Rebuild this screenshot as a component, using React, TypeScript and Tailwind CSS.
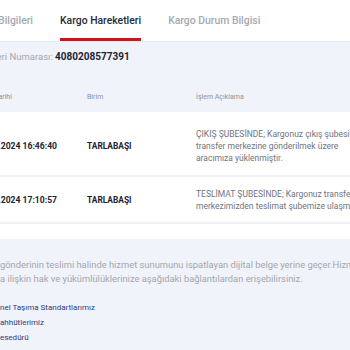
import React from 'react';

const rows = [
  {
    date: '10.09.2024 16:46:40',
    unit: 'TARLABAŞI',
    desc: 'ÇIKIŞ ŞUBESİNDE; Kargonuz çıkış şubesinden transfer merkezine gönderilmek üzere aracımıza yüklenmiştir.',
  },
  {
    date: '11.09.2024 17:10:57',
    unit: 'TARLABAŞI',
    desc: 'TESLİMAT ŞUBESİNDE; Kargonuz transfer merkezimizden teslimat şubemize ulaşmıştır.',
  },
];

const links = ['nel Taşıma Standartlarımız', 'ahhütlerimiz', 'esedürü'];

export default function App() {
  return (
    <div className="w-[350px] h-[350px] overflow-hidden bg-[#f0f3f9] font-['Roboto',sans-serif]">
      {/* tabs */}
      <div className="h-[42px] bg-white border-b border-[#e8ebf1]">
        <div className="flex h-full gap-[27px] -ml-[41px] whitespace-nowrap text-[10.4px] font-medium">
          <div className="flex items-center text-[#a5a9b3]">Gönderi Bilgileri</div>
          <div className="relative flex items-center text-[#262b38]">
            Kargo Hareketleri
            <span className="absolute left-0 right-0 bottom-0 h-[3px] bg-[#d0121b]" />
          </div>
          <div className="flex items-center text-[#a5a9b3]">Kargo Durum Bilgisi</div>
        </div>
      </div>

      <div className="-ml-[24px] w-[420px]">
        <div className="-ml-[2px] pt-[7px] h-[23px] flex items-center whitespace-nowrap leading-[16px]">
          <span className="text-[9.5px] text-[#a2a6b0]">Gönderi Numarası:&nbsp;</span>
          <span className="text-[10px] font-bold text-[#1e2433]">4080208577391</span>
        </div>

        {/* table header */}
        <div className="mt-[26px] grid grid-cols-[111px_109px_176px] pb-[9px] text-[7px] leading-[12px] text-[#8d919b]">
          <div>İşlem Tarihi</div>
          <div>Birim</div>
          <div>İşlem Açıklama</div>
        </div>

        {/* table body */}
        <div className="bg-white pb-[15px]">
          {rows.map((r, i) => (
            <div
              key={i}
              className={`grid grid-cols-[111px_109px_176px] items-center border-b-2 border-[#eef1f5] ${
                i === 0 ? 'pt-[16px] pb-[11px]' : 'pt-[11px] pb-[10px]'
              }`}
            >
              <div className="whitespace-nowrap text-[8.6px] font-bold text-[#1e2433]">{r.date}</div>
              <div className="whitespace-nowrap text-[8.4px] font-bold text-[#1e2433]">{r.unit}</div>
              <div className="text-[8.5px] leading-[12px] text-[#70747f]">{r.desc}</div>
            </div>
          ))}
        </div>
      </div>

      {/* footer note */}
      <div className="pt-[19px] whitespace-nowrap text-[9.35px] leading-[14px] text-[#a2a6b0]">
        <div>gönderinin teslimi halinde hizmet sunumunu ispatlayan dijital belge yerine geçer.Hizmetlerimize</div>
        <div>a ilişkin hak ve yükümlülüklerinize aşağıdaki bağlantılardan erişebilirsiniz.</div>
      </div>
      <div className="mt-[14px] flex flex-col text-[8px] leading-[15px] text-[#2f3a7e]">
        {links.map((l) => (
          <a key={l} className="whitespace-nowrap">
            {l}
          </a>
        ))}
      </div>
    </div>
  );
}
